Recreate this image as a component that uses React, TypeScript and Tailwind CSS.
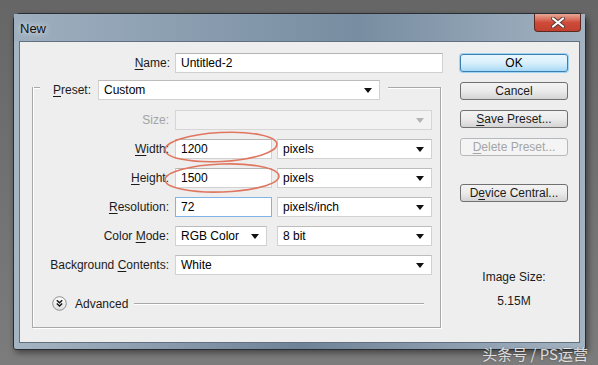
const Arrow = ({ disabled }: { disabled?: boolean }) => (
  <svg width="8" height="5" viewBox="0 0 8 5" className="shrink-0">
    <path d="M0 0 H8 L4 5 Z" fill={disabled ? "#b4b4b4" : "#111"} />
  </svg>
);

const Field = ({
  value,
  width,
  focused,
  disabled,
}: {
  value?: string;
  width: string;
  focused?: boolean;
  disabled?: boolean;
}) => (
  <div
    className={`${width} h-[20px] flex items-center pl-[5px] border ${
      focused
        ? "border-[#7eb4ea] bg-white"
        : disabled
        ? "border-[#d6d6d6] bg-[#f2f2f2]"
        : "border-[#d0d0d0] border-t-[#b5b5b5] bg-white"
    }`}
  >
    {value}
  </div>
);

const Select = ({
  value,
  width,
  disabled,
}: {
  value?: string;
  width: string;
  disabled?: boolean;
}) => (
  <div
    className={`${width} h-[20px] flex items-center justify-between pl-[5px] pr-[7px] border ${
      disabled
        ? "border-[#d6d6d6] bg-[#f2f2f2]"
        : "border-[#d2d2d2] border-t-[#bcbcbc] bg-white"
    }`}
  >
    <span>{value}</span>
    <Arrow disabled={disabled} />
  </div>
);

const Label = ({ children, disabled }: { children: React.ReactNode; disabled?: boolean }) => (
  <div
    className={`w-[137px] shrink-0 flex justify-end whitespace-nowrap pr-[1px] ${
      disabled ? "text-[#a3a3a3]" : "text-[#1b1b1b]"
    }`}
  >
    <span>{children}</span>
  </div>
);

const Button = ({
  children,
  primary,
  disabled,
}: {
  children: React.ReactNode;
  primary?: boolean;
  disabled?: boolean;
}) => (
  <div
    className={`h-[18px] w-[108px] flex items-center justify-center rounded-[3px] border ${
      primary
        ? "border-[#3c7fb1] bg-gradient-to-b from-[#eaf6fd] via-[#d9f0fc] to-[#a7d9f5] shadow-[0_0_0_1px_#9fd4f3]"
        : disabled
        ? "border-[#b5b9bc] bg-[#f4f4f4] text-[#a5a5a5]"
        : "border-[#707070] bg-gradient-to-b from-[#f3f3f3] via-[#ebebeb] to-[#d4d4d4] text-[#1b1b1b]"
    }`}
  >
    {children}
  </div>
);

const U = ({ children }: { children: React.ReactNode }) => (
  <span className="underline underline-offset-2">{children}</span>
);

export default function App() {
  return (
    <div className="relative w-[598px] h-[365px] overflow-hidden bg-gradient-to-b from-[#666666] to-[#7c7c7c] pt-[13px] pl-[13px] font-['Liberation_Sans',sans-serif] text-[12px] leading-none">
      {/* Window */}
      <div className="w-[573px] h-[337px] flex flex-col rounded-t-[7px] rounded-b-[3px] border border-[#2a2e33] bg-gradient-to-r from-[#a6b5c3] via-[#6f8397] to-[#a4b3c1] shadow-[2px_3px_6px_rgba(0,0,0,0.45)]">
        {/* Title bar */}
        <div className="h-[27px] flex items-start justify-between pl-[6px] pr-[4px] bg-gradient-to-r from-[#9eafbf] via-[#788da1] via-60% to-[#a3b3c2]">
          <span className="mt-[8px] text-[13px] text-[#111] [text-shadow:0_0_6px_rgba(255,255,255,0.9)]">New</span>
          <div className="w-[47px] h-[18px] flex items-center justify-center rounded-b-[4px] border border-t-0 border-[#5b2921] bg-gradient-to-b from-[#e7a797] via-[#cf4a3a] to-[#c0412f]">
            <svg width="14" height="11" viewBox="0 0 14 11">
              <path d="M2 1.5 L12 9.5 M12 1.5 L2 9.5" stroke="#5a3a36" strokeWidth="4" strokeLinecap="round" />
              <path d="M2 1.5 L12 9.5 M12 1.5 L2 9.5" stroke="#fff" strokeWidth="2.2" strokeLinecap="round" />
            </svg>
          </div>
        </div>

        {/* Client area */}
        <div className="mx-[5px] h-[302px] flex border border-[#617080] bg-[#eeeeee]">
          {/* Left column */}
          <div className="w-[440px] flex flex-col">
            {/* Name */}
            <div className="mt-[11px] flex items-center h-[20px]">
              <div className="w-[150px] text-right text-[#1b1b1b]">
                <U>N</U>ame:
              </div>
              <div className="ml-[5px]">
                <Field value="Untitled-2" width="w-[268px]" />
              </div>
            </div>

            {/* Group box */}
            <div className="ml-[12px] w-[409px] mt-[7px] flex flex-col">
              <div className="h-[19px] flex items-start">
                <div className="mt-[7px] w-[8px] h-[2px] border-t border-b border-t-[#a9a9a9] border-b-white" />
                <div className="ml-[13px] w-[45px] h-[19px] flex items-center text-[#1b1b1b]">
                  <span>
                    <U>P</U>reset:
                  </span>
                </div>
                <Select value="Custom" width="w-[282px]" />
                <div className="ml-[8px] mt-[7px] flex-1 h-[2px] border-t border-b border-t-[#a9a9a9] border-b-white" />
              </div>
              <div className="-mt-[12px] h-[241px] flex flex-col border-l border-r border-b border-[#a9a9a9] shadow-[inset_1px_0_0_#fff,1px_1px_0_#fff]">
                <div className="mt-[23px] flex flex-col gap-[9px]">
                  <div className="flex items-center h-[20px]">
                    <Label disabled>Size:</Label>
                    <div className="ml-[5px]">
                      <Select width="w-[257px]" disabled />
                    </div>
                  </div>
                  <div className="flex items-center h-[20px]">
                    <Label>
                      <U>W</U>idth:
                    </Label>
                    <div className="ml-[5px] flex gap-[5px]">
                      <Field value="1200" width="w-[97px]" />
                      <Select value="pixels" width="w-[155px]" />
                    </div>
                  </div>
                  <div className="flex items-center h-[20px]">
                    <Label>
                      <U>H</U>eight:
                    </Label>
                    <div className="ml-[5px] flex gap-[5px]">
                      <Field value="1500" width="w-[97px]" />
                      <Select value="pixels" width="w-[155px]" />
                    </div>
                  </div>
                  <div className="flex items-center h-[20px]">
                    <Label>
                      <U>R</U>esolution:
                    </Label>
                    <div className="ml-[5px] flex gap-[5px]">
                      <Field value="72" width="w-[97px]" focused />
                      <Select value="pixels/inch" width="w-[155px]" />
                    </div>
                  </div>
                  <div className="flex items-center h-[20px]">
                    <Label>
                      Color <U>M</U>ode:
                    </Label>
                    <div className="ml-[5px] flex gap-[10px]">
                      <Select value="RGB Color" width="w-[92px]" />
                      <Select value="8 bit" width="w-[155px]" />
                    </div>
                  </div>
                  <div className="flex items-center h-[20px]">
                    <Label>
                      Background <U>C</U>ontents:
                    </Label>
                    <div className="ml-[5px]">
                      <Select value="White" width="w-[257px]" />
                    </div>
                  </div>
                </div>

                {/* Advanced */}
                <div className="mt-[21px] h-[15px] flex items-center pl-[19px] pr-[16px]">
                  <svg width="15" height="15" viewBox="0 0 15 15" className="shrink-0">
                    <defs>
                      <linearGradient id="adv" x1="0" y1="0" x2="0" y2="1">
                        <stop offset="0" stopColor="#ffffff" />
                        <stop offset="1" stopColor="#dedede" />
                      </linearGradient>
                    </defs>
                    <circle cx="7.5" cy="7.5" r="6.8" fill="url(#adv)" stroke="#8e8e8e" />
                    <path d="M4.8 4.3 L7.5 6.8 L10.2 4.3 M4.8 7.6 L7.5 10.1 L10.2 7.6" stroke="#111" strokeWidth="1.4" fill="none" />
                  </svg>
                  <span className="ml-[8px] text-[#1b1b1b]">Advanced</span>
                  <div className="ml-[6px] flex-1 h-[2px] border-t border-b border-t-[#a9a9a9] border-b-white" />
                </div>
              </div>
            </div>
          </div>

          {/* Right column */}
          <div className="w-[108px] flex flex-col">
            <div className="mt-[12px] flex flex-col gap-[10px]">
              <Button primary>OK</Button>
              <Button>Cancel</Button>
              <Button>
                <span>
                  <U>S</U>ave Preset...
                </span>
              </Button>
              <Button disabled>
                <span>
                  <U>D</U>elete Preset...
                </span>
              </Button>
            </div>
            <div className="mt-[28px]">
              <Button>
                <span>
                  D<U>e</U>vice Central...
                </span>
              </Button>
            </div>
            <div className="mt-[69px] text-center text-[#1b1b1b]">Image Size:</div>
            <div className="mt-[12px] text-center text-[#1b1b1b]">5.15M</div>
          </div>
        </div>
      </div>

      {/* Annotation ellipses */}
      <svg className="absolute left-0 top-0 pointer-events-none" width="598" height="365" viewBox="0 0 598 365">
        <ellipse cx="221" cy="147" rx="56" ry="14.5" transform="rotate(-3 221 147)" fill="none" stroke="#e0765f" strokeWidth="1.6" />
        <ellipse cx="222" cy="178" rx="57" ry="14" transform="rotate(-2 222 178)" fill="none" stroke="#e0765f" strokeWidth="1.6" />
      </svg>

      {/* Watermark */}
      <div className="absolute right-[10px] bottom-[4px] text-[15px] text-white/80 font-['Noto_Sans_CJK_SC',sans-serif] [text-shadow:0_0_2px_rgba(0,0,0,0.4)]">
        头条号 / PS运营
      </div>
    </div>
  );
}
